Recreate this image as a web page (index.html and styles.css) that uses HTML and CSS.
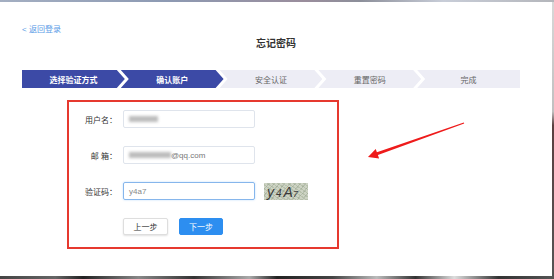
FILE: index.html
```html
<!DOCTYPE html>
<html lang="zh-CN">
<head>
<meta charset="utf-8">
<title>忘记密码</title>
<link rel="stylesheet" href="styles.css">
</head>
<body>
<div class="screen">
  <div class="strip-top"></div>
  <div class="middle">
    <div class="page">
      <a class="back" href="#">&lt; 返回登录</a>
      <h1 class="title">忘记密码</h1>
      <ol class="steps">
        <li class="step on">选择验证方式</li>
        <li class="step on">确认账户</li>
        <li class="step">安全认证</li>
        <li class="step">重置密码</li>
        <li class="step">完成</li>
      </ol>
      <form class="box">
        <div class="row">
          <span class="label">用户名：</span>
          <div class="field"><span class="blur blur-name"></span></div>
        </div>
        <div class="row">
          <span class="label">邮 箱：</span>
          <div class="field"><span class="blur blur-mail"></span><span>@qq.com</span></div>
        </div>
        <div class="row">
          <span class="label">验证码：</span>
          <div class="field focus"><span>y4a7</span></div>
          <div class="captcha"><span class="c1">y</span><span class="c2">4</span><span class="c3">A</span><span class="c4">7</span></div>
        </div>
        <div class="actions">
          <span class="btn">上一步</span>
          <span class="btn primary">下一步</span>
        </div>
      </form>
    </div>
    <div class="strip-right"></div>
  </div>
  <div class="strip-bottom"></div>
  <svg class="annot" width="554" height="279" viewBox="0 0 554 279">
    <polygon fill="#ee1b1b" points="464.2,123.5 377.9,155.1 379.1,158.4 368,157 375.7,149 376.9,152.3 463.8,122.5"/>
  </svg>
</div>
</body>
</html>
```

FILE: styles.css
```css
* { box-sizing: border-box; margin: 0; padding: 0; }
html, body { width: 554px; height: 279px; overflow: hidden; }
body { background: #fff; font-family: "Liberation Sans", "Noto Sans CJK SC", sans-serif; }

.screen { position: relative; width: 554px; height: 279px; display: flex; flex-direction: column; background: #fff; }
.strip-top { height: 2px; background: linear-gradient(90deg, #a4afc2 0%, #8d9ab3 30%, #9a8d9c 55%, #8c8f9a 65%, #c8cdd8 80%, #b4b6bb 100%); }
.middle { flex: 1; display: flex; }
.page { flex: 1; }
.strip-right { width: 2px; background: linear-gradient(180deg, #d8d8d8 0%, #c0c0c0 40%, #5a4040 45%, #555 100%); }
.strip-bottom { height: 3px; background: linear-gradient(90deg, #444 0%, #666 10%, #222 15%, #888 25%, #333 35%, #aaa 45%, #222 50%, #444 60%, #bbb 68%, #333 75%, #ddd 82%, #333 90%, #555 100%); }

.back { display: block; margin: 23px 0 0 22px; font-size: 8px; line-height: 10px; color: #5b9be6; text-decoration: none; }
.title { margin-top: 3px; text-align: center; font-size: 10px; line-height: 12px; font-weight: bold; color: #333; }

.steps { display: flex; list-style: none; width: 498px; height: 18px; margin: 20px 0 0 22px; }
.step { flex: 1; margin-left: -4px; display: flex; align-items: center; justify-content: center; font-size: 8px; color: #666; background: #ededf5;
  clip-path: polygon(0 0, calc(100% - 8px) 0, 100% 50%, calc(100% - 8px) 100%, 0 100%, 8px 50%); }
.step:first-child { margin-left: 0; clip-path: polygon(0 0, calc(100% - 8px) 0, 100% 50%, calc(100% - 8px) 100%, 0 100%); }
.step:last-child { clip-path: polygon(0 0, 100% 0, 100% 100%, 0 100%, 8px 50%); }
.step.on { background: #3c4aa6; color: #fff; font-weight: bold; }

.box { width: 272px; height: 149px; margin: 12px 0 0 67px; border: 2px solid #e6392f; padding-top: 8px; display: flex; flex-direction: column; gap: 18px; }
.row { display: flex; align-items: center; height: 18px; }
.label { width: 48px; margin-right: 6px; text-align: right; font-size: 8px; color: #333; white-space: pre; }
.field { width: 132px; height: 18px; border: 1px solid #dfe4ec; border-radius: 2px; padding-left: 5px; display: flex; align-items: center; font-size: 8px; color: #777; }
.field.focus { border-color: #86b6ec; box-shadow: 0 0 2px rgba(45, 140, 240, 0.35); color: #888; }
.blur { display: inline-block; height: 6px; background: #bdbdbd; filter: blur(1.4px); }
.blur-name { width: 29px; }
.blur-mail { width: 42px; }

.captcha { margin-left: 9px; width: 44px; height: 17px; display: flex; align-items: flex-end; padding: 0 0 1px 3px; font-style: italic; color: #3a3a3a; line-height: 1;
  background:
    repeating-linear-gradient(35deg, rgba(120,140,100,.25) 0 1px, transparent 1px 3px),
    repeating-linear-gradient(-50deg, rgba(90,110,90,.2) 0 1px, transparent 1px 4px),
    #cdd3c4; }
.c1 { font-size: 14px; margin-right: 2px; }
.c2 { font-size: 10px; margin-right: 2px; }
.c3 { font-size: 14px; }
.c4 { font-size: 9px; }

.actions { display: flex; gap: 11px; padding-left: 54px; }
.btn { width: 45px; height: 17px; display: flex; align-items: center; justify-content: center; font-size: 8px; color: #333; background: #fff; border: 1px solid #dedede; border-radius: 2px; box-shadow: 0 1px 2px rgba(0,0,0,.12); }
.btn.primary { width: 44px; background: #2d8ef0; border-color: #2d8ef0; color: #fff; box-shadow: none; }

.annot { position: absolute; top: 0; left: 0; pointer-events: none; }
```
